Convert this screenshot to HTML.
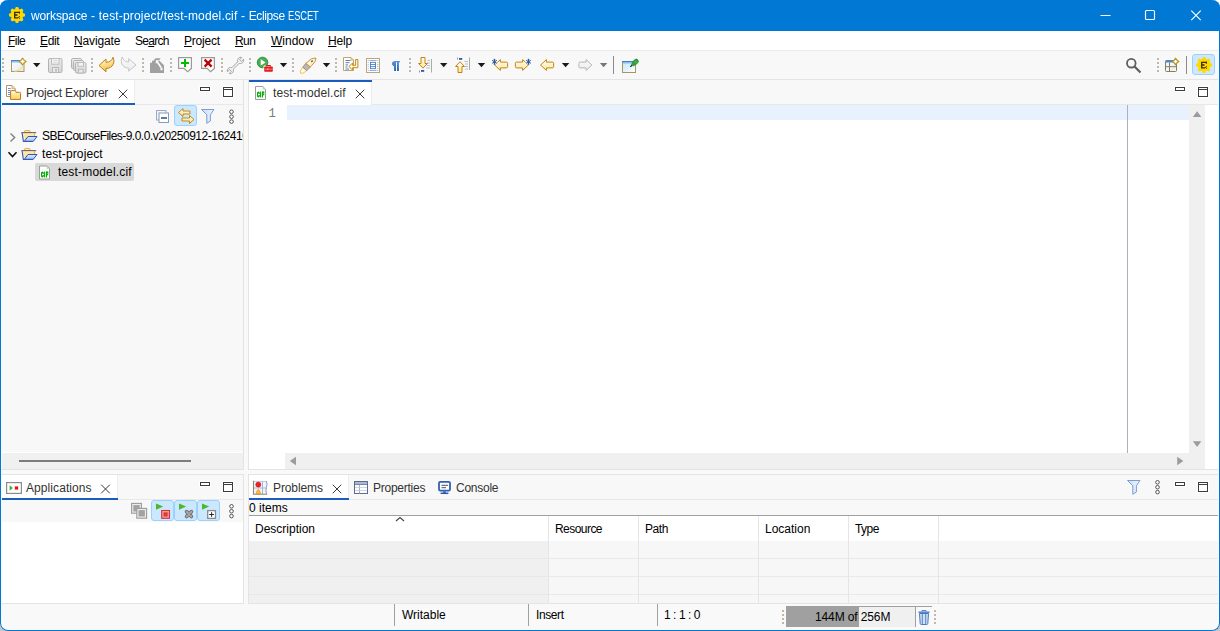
<!DOCTYPE html>
<html lang="en">
<head>
<meta charset="utf-8">
<title>workspace - test-project/test-model.cif - Eclipse ESCET</title>
<style>
*{box-sizing:border-box;margin:0;padding:0}
html,body{width:1220px;height:631px;overflow:hidden;background:#fff}
body{font-family:"Liberation Sans",sans-serif;font-size:12px;color:#000;position:relative}
.a{position:absolute}
.t{position:absolute;white-space:nowrap;line-height:16px;height:16px}
#win{left:0;top:0;width:1220px;height:631px;background:#f9f9f9;border-radius:8px;overflow:hidden}
#frame{left:0;top:0;width:1220px;height:631px;border:1px solid #0078d4;border-top:none;border-radius:8px;z-index:50;pointer-events:none}
#title{left:0;top:0;width:1220px;height:31px;background:#0078d4;color:#fff}
#menu{left:1px;top:31px;width:1218px;height:19px;background:#fff}
#menu .t{top:2px}
#tb{left:1px;top:49px;width:1218px;height:31px;background:#f8f8f8;border-top:1px solid #fff;border-bottom:1px solid #e6e6e6;box-shadow:inset 0 1px 0 #ececec}
.panel{position:absolute;background:#f8f8f8;border:1px solid #e4e4e4;overflow:hidden}
.tab{position:absolute;background:#fff;height:24px;top:0;border-right:1px solid #ededed}
.tabline{position:absolute;left:0;top:24px;height:1px;background:#e8e8e8}
.ul{position:absolute;height:2px;background:#1b5cbe}
.tt{color:#333}
svg{position:absolute;overflow:visible}
u{text-decoration:underline;text-underline-offset:1px}
.sep{position:absolute;width:2px;height:14px;background-image:repeating-linear-gradient(#c0b8a8 0 2px,transparent 2px 4px)}
.vsep{position:absolute;width:1px;height:18px;background:#8a8a8a}
.hl{position:absolute;background:#cce8ff;border:1px solid #99d1ff;border-radius:3px}
.dd{position:absolute;width:0;height:0;border-left:4px solid transparent;border-right:4px solid transparent;border-top:4px solid #1a1a1a}
.mn{position:absolute;width:10px;height:4px;border:1px solid #3c3c3c;background:#fff;box-shadow:0 0 0 1px #fff}
.mx{position:absolute;width:10px;height:10px;border:1px solid #3c3c3c;border-top-width:1px;background:#fff;box-shadow:0 0 0 1px #fff}
.mx:after{content:"";position:absolute;left:0;top:1px;width:8px;height:1px;background:#3c3c3c}
.x{position:absolute;width:10px;height:10px}
.dots{position:absolute;width:5px;height:15px}
.cs{top:41px;width:1px;height:87px;background:#e5e5e5}
</style>
</head>
<body>
<div class="a" style="left:0;top:621px;width:10px;height:10px;background:#c6c6c6"></div>
<div class="a" style="left:1210px;top:621px;width:10px;height:10px;background:#c6c6c6"></div>
<div id="win" class="a">
<!-- title bar -->
<div id="title" class="a">
  <svg style="left:9px;top:7px" width="16" height="16" viewBox="0 0 16 16">
    <g fill="#ffd800">
      <circle cx="8" cy="8" r="6.350"/>
      <rect x="6.300" y="0" width="3.400" height="16" rx="1.300"/>
      <rect x="6.300" y="0" width="3.400" height="16" rx="1.300" transform="rotate(45 8 8)"/>
      <rect x="6.300" y="0" width="3.400" height="16" rx="1.300" transform="rotate(90 8 8)"/>
      <rect x="6.300" y="0" width="3.400" height="16" rx="1.300" transform="rotate(135 8 8)"/>
    </g>
    <path d="M10.300 5.300H5.700V10.900H9M5.700 8H8.500" fill="none" stroke="#3a2c00" stroke-width="1.300"/>
    <path d="M10.400 4.500V6.800" stroke="#3a2c00" stroke-width="1"/>
    <path d="M11 9.300L9.300 10.400L11 11.600" fill="none" stroke="#3a2c00" stroke-width=".9"/>
  </svg>
  <div class="t" style="left:31px;top:8px;letter-spacing:-0.11px;will-change:transform">workspace<span style="letter-spacing:0.25px"> - </span><span style="letter-spacing:0.17px">test-project/test-model.cif</span><span style="letter-spacing:0.2px"> - </span><span style="letter-spacing:-0.37px">Eclipse</span> <span style="display:inline-block;transform:scaleX(.775);transform-origin:0 50%;letter-spacing:-0.1px">ESCET</span></div>
  <svg style="left:1100px;top:10px" width="110" height="12" viewBox="0 0 110 12" fill="none" stroke="#fff" stroke-width="1.150">
    <path d="M0.5 5.5H10.5"/>
    <rect x="45.5" y="0.5" width="9" height="9" rx="1"/>
    <path d="M91.300 0.700L100.700 10.100M100.700 0.700L91.300 10.100"/>
  </svg>
</div>
<!-- menu bar -->
<div id="menu" class="a">
  <div class="t" style="left:7px;letter-spacing:-0.55px"><u>F</u>ile</div>
  <div class="t" style="left:39px;letter-spacing:-0.35px"><u>E</u>dit</div>
  <div class="t" style="left:73px;letter-spacing:-0.13px"><u>N</u>avigate</div>
  <div class="t" style="left:134px;letter-spacing:-0.7px">Se<u>a</u>rch</div>
  <div class="t" style="left:183px;letter-spacing:-0.2px"><u>P</u>roject</div>
  <div class="t" style="left:234px;letter-spacing:-0.6px"><u>R</u>un</div>
  <div class="t" style="left:270px;letter-spacing:0px"><u>W</u>indow</div>
  <div class="t" style="left:327px;letter-spacing:-0.2px"><u>H</u>elp</div>
</div>
<!-- main toolbar -->
<div id="tb" class="a">
  <div class="sep" style="left:1px;top:8px"></div>
  <div class="sep" style="left:90px;top:8px"></div>
  <div class="sep" style="left:141px;top:8px"></div>
  <div class="sep" style="left:169px;top:8px"></div>
  <div class="sep" style="left:220px;top:8px"></div>
  <div class="sep" style="left:248px;top:8px"></div>
  <div class="sep" style="left:291px;top:8px"></div>
  <div class="sep" style="left:334px;top:8px"></div>
  <div class="sep" style="left:408px;top:8px"></div>
  <div class="sep" style="left:1156px;top:8px"></div>
  <div class="vsep" style="left:612px;top:6px"></div>
  <div class="vsep" style="left:1185px;top:6px"></div>
  <div class="hl" style="left:1191px;top:4px;width:23px;height:21px"></div>
</div>
<svg id="tbi" class="a" style="left:0;top:50px;z-index:5" width="1220" height="30" viewBox="0 50 1220 30">
<defs>
  <linearGradient id="gy" x1="0" y1="0" x2="0" y2="1"><stop offset="0" stop-color="#fffffa"/><stop offset="1" stop-color="#fee69c"/></linearGradient>
  <linearGradient id="gg" x1="0" y1="0" x2="0" y2="1"><stop offset="0" stop-color="#fbfbfb"/><stop offset="1" stop-color="#ebebeb"/></linearGradient>
  <linearGradient id="gb" x1="0" y1="0" x2="1" y2="1"><stop offset="0" stop-color="#ffffff"/><stop offset="1" stop-color="#dbe9f8"/></linearGradient>
  <linearGradient id="gp" x1="0" y1="0" x2="0" y2="1"><stop offset="0" stop-color="#5f95d6"/><stop offset="1" stop-color="#1d63b4"/></linearGradient>
  <linearGradient id="gs" x1="0" y1="0" x2="0" y2="1"><stop offset="0" stop-color="#ededed"/><stop offset="1" stop-color="#d6d6d6"/></linearGradient>
  <linearGradient id="gu" x1="0" y1="0" x2="0.300" y2="1"><stop offset="0" stop-color="#fffef8"/><stop offset=".5" stop-color="#fde596"/><stop offset="1" stop-color="#f6bb4a"/></linearGradient>
  <linearGradient id="gc" x1="0" y1="0" x2="1" y2="1"><stop offset="0" stop-color="#c4e6fa"/><stop offset="1" stop-color="#ffffff"/></linearGradient>
  <path id="arL" d="M0.6 6L6.4 0.6V3.1H12.4Q13.6 3.1 13.6 4.300V7.700Q13.6 8.900 12.4 8.900H6.4V11.4Z"/>
  <path id="ddn" d="M0 0h7.4L3.7 4.2z"/>
</defs>
<!-- new -->
<g>
  <rect x="11.500" y="60.500" width="12.500" height="11" fill="url(#gb)" stroke="#b09a56"/>
  <rect x="11" y="60" width="13.500" height="1.600" fill="#3f86d4"/>
  <rect x="12" y="61.600" width="11.500" height="1" fill="#9cc6ee"/>
  <path d="M14.500 71Q21.500 70.500 22.800 65.500" fill="none" stroke="#f3e2a6" stroke-width="1.300"/>
  <path d="M22.600 58.300Q23.700 60.400 25.800 61.500Q23.700 62.600 22.600 64.700Q21.500 62.600 19.400 61.500Q21.500 60.400 22.600 58.300Z" fill="#fff" stroke="#b99422" stroke-width="1.500" stroke-linejoin="round"/>
  <path d="M22.600 59.500V63.500M20.600 61.500H24.600" stroke="#fff" stroke-width="1.300"/>
</g>
<use href="#ddn" x="33" y="63" fill="#1a1a1a"/>
<!-- save (disabled) -->
<g fill="url(#gs)" stroke="#b2b2b2">
  <rect x="48.500" y="58.500" width="13.500" height="14" rx="1.300"/>
  <rect x="51.500" y="58.500" width="7.500" height="5.700" fill="#f4f4f4" stroke="#bcbcbc"/>
  <path d="M53 60.500H57.500M53 62.300H57.500" stroke="#d6d6d6" stroke-width=".8"/>
  <rect x="52.500" y="67.500" width="6" height="5" fill="#e9e9e9" stroke="#b8b8b8"/>
  <rect x="55.300" y="68.700" width="1.400" height="3" fill="#b0b0b0" stroke="none"/>
</g>
<!-- save all (disabled) -->
<g fill="url(#gs)" stroke="#b2b2b2">
  <rect x="71.500" y="58.500" width="10" height="10" rx="1.300"/>
  <rect x="73.500" y="60.500" width="10" height="10" rx="1.300"/>
  <rect x="75.500" y="62.500" width="10.500" height="10.500" rx="1.300"/>
  <rect x="78" y="62.500" width="5.500" height="3.800" fill="#f4f4f4" stroke="#bcbcbc"/>
  <rect x="78.500" y="69.200" width="4.600" height="3.800" fill="#e9e9e9" stroke="#b8b8b8"/>
</g>
<!-- undo -->
<path d="M99 65.500L106 59V62.300C109.500 62.300 112 60.500 113 57.300C115.200 61.500 113.500 68.300 106 68.500V71.800Z" fill="url(#gu)" stroke="#bd7f18" stroke-linejoin="round"/>
<!-- redo (disabled) -->
<path d="M136 65L128.700 58.600V62C125.500 62 123 60 122.200 57C120 61 121.500 68 128.700 68.200V71.200Z" fill="url(#gg)" stroke="#c6c6c6" stroke-linejoin="round"/>
<!-- build-like gray -->
<path d="M150 73V62.800H152V60.800H153.500L155.500 58.200H160.800L159 60.300L164 65.300V73Z" fill="#a0a0a0"/>
<path d="M155.800 60.200H159.300L158.100 61.500L161.900 67.300L160.500 68.200L156.900 62.700L155.800 63.900Z" fill="#fbfbfb"/>
<path d="M160.500 68.300L162.500 67.500V70.300H160.500Z" fill="#fbfbfb"/>
<!-- add -->
<g>
  <path d="M178.600 57.600H191.400V68.400L187.600 71.800L184 68.400H178.600Z" fill="#fff" stroke="#9a9a9a" stroke-width="1.200"/>
  <path d="M185 59V67M181 63H189" stroke="#00bf00" stroke-width="2"/>
</g>
<!-- remove -->
<g>
  <path d="M201.600 57.600H214.400V68.400L210.600 71.800L207 68.400H201.600Z" fill="#fff" stroke="#9a9a9a" stroke-width="1.200"/>
  <path d="M204.600 59.600L211.600 66.600M211.600 59.600L204.600 66.600" stroke="#c00000" stroke-width="2.300"/>
</g>
<!-- wrench (disabled) -->
<path d="M243.600 59.200L241.300 61.400L239.600 59.700L241.800 57.400C239.400 56.700 236.800 58.800 237.700 61.800L231.800 67.700C228.800 66.800 226.700 69.400 227.400 71.800L229.700 69.600L231.400 71.300L229.200 73.600C231.600 74.300 234.200 72.200 233.300 69.200L239.200 63.300C242.200 64.200 244.300 61.600 243.600 59.200Z" fill="#f4f4f4" stroke="#a4a4a4" stroke-width="1" stroke-linejoin="round"/>
<!-- run external tools -->
<g>
  <circle cx="262.550" cy="62.450" r="5.300" fill="#46ad4c" stroke="#2b8a3a" stroke-width=".9"/>
  <path d="M260.700 59.300L265.700 62.450L260.700 65.600Z" fill="#fff"/>
  <rect x="263.500" y="65.600" width="10" height="6.900" rx="1" fill="#fbfbfb"/>
  <path d="M266.700 66.600V65.500H270.300V66.600" fill="none" stroke="#df1616" stroke-width="1.100"/>
  <rect x="264.200" y="66.500" width="8.600" height="5.300" rx=".8" fill="#e31a1a"/>
  <path d="M264.500 69.200H272.600" stroke="#f59a9a" stroke-width=".8"/>
  <path d="M267.700 68.400V70" stroke="#f59a9a" stroke-width="1.600"/>
</g>
<use href="#ddn" x="279.800" y="63" fill="#1a1a1a"/>
<!-- pen -->
<g stroke-linejoin="round">
  <path d="M300.200 71.200L302.800 67.200L306.800 70.700L303 73.200L300.600 73.200Z" fill="#fffdf0" stroke="#f2c24e" stroke-width="1"/>
  <path d="M302.800 67.200L305.800 63.300L310.300 67L306.800 70.700Z" fill="#b9b7c2" stroke="#9a8452" stroke-width=".8"/>
  <path d="M305.800 63.300L311.800 58.600L316 58L315 61.800L310.300 67Z" fill="#fdf1c4" stroke="#c48d28" stroke-width=".9"/>
  <path d="M309 63.500L313.500 59.800" stroke="#fffdf4" stroke-width="1.300"/>
  <path d="M311.300 62L312.700 60.500" stroke="#2f5aa6" stroke-width="1.200"/>
</g>
<use href="#ddn" x="322.800" y="63" fill="#1a1a1a"/>
<!-- word wrap -->
<g>
  <path d="M343.500 57.500H351L353.500 60V70.500H343.500Z" fill="#fffef8" stroke="#b9a56e"/>
  <path d="M351 57.500V60H353.500" fill="none" stroke="#b9a56e" stroke-width=".8"/>
  <path d="M345.500 60.500H350.500M345.500 62.700H349.500M345.500 64.900H348M345.500 67H347.500M345.500 69H349" stroke="#4870b4" stroke-width=".9"/>
  <path d="M355.600 59.500H357.900V67.700H352.600V70L348.800 66.500L352.600 63V65.300H355.600Z" fill="#fff6d2" stroke="#c0820f" stroke-width=".9" stroke-linejoin="round"/>
</g>
<!-- block selection -->
<g>
  <rect x="366.500" y="58.500" width="13" height="14" fill="#fff" stroke="#b9a978"/>
  <path d="M369.500 60.500H376.500M369.500 70.500H376.500" stroke="#86a6dc" stroke-width=".9"/>
  <rect x="370.500" y="62.300" width="5" height="6.400" fill="#fff" stroke="#3a6ebc" stroke-width=".8"/>
  <path d="M370.500 64.500H375.500M370.500 66.600H375.500" stroke="#3a6ebc" stroke-width=".8"/>
  <path d="M368.200 60V72M377.800 60V72" stroke="#86a6dc" stroke-width=".9" stroke-dasharray="1 1"/>
</g>
<!-- pilcrow -->
<g fill="url(#gp)">
  <path d="M395 61H400V62.300H398.900V71H397V62.300H396V71H394.100V66.200C392.800 66.200 392 65 392 63.600C392 62.100 393 61 395 61Z" stroke="#fdfdfd" stroke-width="1.400" paint-order="stroke"/>
</g>
<!-- next annotation -->
<g>
  <path d="M427.500 60.500H430M427 63H430M427 65.500H430M426 68H430" stroke="#a3b6de" stroke-width=".9"/>
  <path d="M431.500 59V72.500" stroke="#9aa890" stroke-width=".9"/>
  <path d="M419.500 70.500V72.500" stroke="#6f8fc4" stroke-width=".9"/>
  <rect x="421" y="70" width="3.200" height="1.800" fill="#2f5aa6"/>
  <path d="M421 57.500H425V63.500H427.500L423 68.200L418.500 63.500H421Z" fill="url(#gy)" stroke="#c2840f" stroke-linejoin="round"/>
</g>
<use href="#ddn" x="440" y="63" fill="#1a1a1a"/>
<!-- prev annotation -->
<g>
  <path d="M464.500 61.500H468M465 64H468M465 66.500H468M465 69H468" stroke="#a3b6de" stroke-width=".9"/>
  <path d="M469.500 57.500V70" stroke="#9aa890" stroke-width=".9"/>
  <path d="M457.500 57.500V59.500" stroke="#6f8fc4" stroke-width=".9"/>
  <rect x="459" y="58" width="3.200" height="1.800" fill="#2f5aa6"/>
  <path d="M458 72.500H462V66.500H464.500L460 61.800L455.500 66.500H458Z" fill="url(#gy)" stroke="#c2840f" stroke-linejoin="round"/>
</g>
<use href="#ddn" x="477.800" y="63" fill="#1a1a1a"/>
<!-- last edit location -->
<g>
  <use href="#arL" x="494" y="59" fill="url(#gy)" stroke="#c2840f" stroke-linejoin="round"/>
  <path d="M494.5 58.800V64.800M492.1 60.300L496.9 63.300M496.9 60.300L492.1 63.300" stroke="#fbfbfb" stroke-width="2.200"/><path d="M494.5 58.800V64.800" stroke="#2f5a96" stroke-width="1.500"/><path d="M492.1 60.300L496.9 63.300M496.9 60.300L492.1 63.300" stroke="#2f5a96" stroke-width="1"/>
</g>
<!-- next edit location -->
<g>
  <use href="#arL" transform="translate(529 59) scale(-1 1)" fill="url(#gy)" stroke="#c2840f" stroke-linejoin="round"/>
  <path d="M528.5 58.800V64.800M526.1 60.300L530.9 63.300M530.9 60.300L526.1 63.300" stroke="#fbfbfb" stroke-width="2.200"/><path d="M528.5 58.800V64.800" stroke="#2f5a96" stroke-width="1.500"/><path d="M526.1 60.300L530.9 63.300M530.9 60.300L526.1 63.300" stroke="#2f5a96" stroke-width="1"/>
</g>
<!-- back -->
<use href="#arL" x="540" y="59" fill="url(#gy)" stroke="#c2840f" stroke-linejoin="round"/>
<use href="#ddn" x="561.900" y="63" fill="#1a1a1a"/>
<!-- forward (disabled) -->
<use href="#arL" transform="translate(592.500 59) scale(-1 1)" fill="url(#gg)" stroke="#b6b6b6" stroke-linejoin="round"/>
<use href="#ddn" x="599.900" y="63" fill="#777"/>
<!-- pin editor -->
<g>
  <rect x="622.500" y="61.500" width="13" height="11" fill="url(#gc)" stroke="#a8965e"/>
  <rect x="622" y="61" width="14" height="1.500" fill="#3b80d0"/>
  <rect x="622.500" y="62.500" width="13" height="1.100" fill="#9cc4ec"/>
  <path d="M630.300 66.800L632.300 64.800" stroke="#222" stroke-width="1.200"/>
  <path d="M631.500 64.300L634.300 60Q636.300 58.200 637.800 59.800Q639.300 61.800 637.200 63.500L633.200 66Z" fill="#2fa43a" stroke="#1f8c2c" stroke-width=".8" stroke-linejoin="round"/>
  <path d="M634.500 61.200L636.700 62.800" stroke="#6cc46c" stroke-width=".9"/>
</g>
<!-- search -->
<g fill="none" stroke="#5e5e5e">
  <circle cx="1131.300" cy="63.200" r="4.300" stroke-width="1.800"/>
  <path d="M1134.500 66.500L1140.500 72.500" stroke-width="2.200"/>
</g>
<!-- open perspective -->
<g>
  <rect x="1165.500" y="60.500" width="11" height="11" rx="1" fill="#eef6ff" stroke="#8c7c52"/>
  <path d="M1165.600 62.500V61.500Q1165.600 60.300 1166.800 60.300H1175.200Q1176.400 60.300 1176.400 61.500V62.500Z" fill="#4a8ad2"/>
  <path d="M1169.500 62.500V71.500M1165.500 66.700H1176.500" stroke="#8c7c52" stroke-width="1"/>
  <path d="M1171.500 70L1175 67.800" stroke="#ecd9a0" stroke-width=".8" stroke-dasharray="1 .7"/>
  <path d="M1175.600 58.300Q1176.700 60.400 1178.800 61.500Q1176.700 62.600 1175.600 64.700Q1174.500 62.600 1172.400 61.500Q1174.500 60.400 1175.600 58.300Z" fill="#fff" stroke="#b99422" stroke-width="1.400" stroke-linejoin="round"/>
</g>
<!-- perspective gear -->
<g transform="translate(1196 57)">
  <g fill="#ffd800">
    <circle cx="8" cy="8" r="6.350"/>
    <rect x="6.300" y="0" width="3.400" height="16" rx="1.300"/>
    <rect x="6.300" y="0" width="3.400" height="16" rx="1.300" transform="rotate(45 8 8)"/>
    <rect x="6.300" y="0" width="3.400" height="16" rx="1.300" transform="rotate(90 8 8)"/>
    <rect x="6.300" y="0" width="3.400" height="16" rx="1.300" transform="rotate(135 8 8)"/>
  </g>
  <path d="M10.300 5.300H5.700V10.900H9M5.700 8H8.500" fill="none" stroke="#3a2c00" stroke-width="1.300"/>
  <path d="M10.400 4.500V6.800" stroke="#3a2c00" stroke-width="1"/>
  <path d="M11 9.300L9.300 10.400L11 11.600" fill="none" stroke="#3a2c00" stroke-width=".9"/>
</g>
</svg>
<!-- Project Explorer -->
<div class="panel" id="pe" style="left:1px;top:79px;width:243px;height:391px;border-left-color:#fbfbfb">
  <div class="tabline" style="width:241px"></div>
  <div class="tab" style="left:0;width:133px"></div>
  <div class="ul" style="left:0;top:23px;width:133px"></div>
  <div class="t tt" style="left:24px;top:5px;letter-spacing:-0.2px">Project Explorer</div>
  <div class="mn" style="left:198px;top:7px"></div>
  <div class="mx" style="left:221px;top:7px"></div>
  <div class="hl" style="left:172px;top:25px;width:23px;height:21px"></div>
  <div class="a" style="left:33px;top:83px;width:99px;height:18px;background:#d9d9d9;border-radius:2px"></div>
  <div class="t" style="left:40px;top:48px;letter-spacing:-0.56px">SBECourseFiles-<span style="letter-spacing:-0.49px">9.0.0.v20250912-162410</span></div>
  <div class="t" style="left:40px;top:66px;letter-spacing:0.12px">test-project</div>
  <div class="t" style="left:56px;top:84px;letter-spacing:0.18px">test-model.cif</div>
  <div class="a" style="left:0;top:372px;width:241px;height:1px;background:#fff"></div>
  <div class="a" style="left:0;top:373px;width:241px;height:16px;background:#f0f0f0"></div>
  <div class="a" style="left:17px;top:380px;width:172px;height:2px;background:#7c7c7c"></div>
</div>
<svg class="a" style="left:0;top:80px;z-index:5" width="245" height="120" viewBox="0 80 245 120">
<defs>
  <linearGradient id="fb" x1="0" y1="0" x2="0" y2="1"><stop offset="0" stop-color="#dcedff"/><stop offset="1" stop-color="#9cc6f2"/></linearGradient>
  <linearGradient id="fl" x1="0" y1="0" x2="0" y2="1"><stop offset="0" stop-color="#fffdf0"/><stop offset="1" stop-color="#fde08a"/></linearGradient>
  <linearGradient id="fy" x1="0" y1="0" x2="0" y2="1"><stop offset="0" stop-color="#fff8c4"/><stop offset="1" stop-color="#fcd55c"/></linearGradient>
  <filter id="nolcd"><feComponentTransfer><feFuncA type="linear" slope="1.150" intercept="0"/></feComponentTransfer></filter>
  <g id="prj">
    <rect x="2" y="3" width="11.500" height="6.500" fill="#fde7a2"/>
    <path d="M3.500 2.500V1.200Q3.500 0.500 4.200 0.500H8.300Q9 0.500 9 1.200V2.500Z" fill="#fdeab0" stroke="#cfae66" stroke-width=".9"/>
    <path d="M13.600 3V6.300" stroke="#cfae66" stroke-width=".9"/>
    <path d="M0.300 2.600H15.200" stroke="#6e5868" stroke-width="1"/>
    <path d="M1.100 3L2.400 11.500H12" fill="none" stroke="#3454b4" stroke-width="1.100"/>
    <path d="M3.300 11.300L7 6.500H16L12.300 11.300Z" fill="url(#fb)" stroke="#3454b4" stroke-width="1" stroke-linejoin="round"/>
  </g>
  <g id="cif">
    <path d="M0.500 0.500H7.800L10.500 3.200V13.500H0.500Z" fill="#fff" stroke="#9c9c9c"/>
    <path d="M7.600 0.800V3.400H10.200Z" fill="#cfcfcf"/>
    <text filter="url(#nolcd)" transform="translate(2.100 11) scale(.500 1)" font-family="Liberation Sans, sans-serif" font-weight="bold" font-size="7.200" fill="#00b000" stroke="#00b000" stroke-width=".800" letter-spacing="1.300">CIF</text>
  </g>
  <g id="x9" fill="none" stroke="#2e2e2e" stroke-width=".95"><path d="M0.700 0.700L9.300 9.300M9.300 0.700L0.700 9.300"/></g>
  <g id="d3" fill="#fff" stroke="#444" stroke-width=".9"><circle cx="2.500" cy="2.300" r="1.800"/><circle cx="2.500" cy="7.200" r="1.800"/><circle cx="2.500" cy="12.100" r="1.800"/></g>
  <linearGradient id="fg" x1="0" y1="0" x2="1" y2="0"><stop offset="0" stop-color="#c4def8"/><stop offset="1" stop-color="#eef6ff"/></linearGradient>
  <g id="fun"><path d="M0.500 0.500H12.900L9.400 5.800V12L5.800 14.300V5.800Z" fill="url(#fg)" stroke="#7d9ccc" stroke-linejoin="round"/></g>
</defs>
<!-- tab icon -->
<g>
  <path d="M6.500 85.500H12L15.200 88.700V96.500H6.500Z" fill="#fff" stroke="#a89a62"/>
  <path d="M12 85.500V88.700H15.200" fill="#e8dfc0" stroke="#b8a870" stroke-width=".8"/>
  <path d="M8 88.500H10.800M8 90.500H10.800M8 92.500H10.800M8 94.500H10.800" stroke="#5f86d0" stroke-width=".9"/>
  <path d="M10.600 99.400V91.500Q10.600 90.600 11.500 90.600H15Q15.800 90.600 15.800 91.500V92.300H19.600Q20.500 92.300 20.500 93.200V99.400Z" fill="url(#fy)" stroke="#c27524" stroke-linejoin="round"/>
  <path d="M11.700 92.300H15.500" stroke="#fffbe0" stroke-width=".8"/>
</g>
<use href="#x9" x="118" y="89"/>
<!-- collapse all -->
<g>
  <rect x="156.500" y="110.500" width="9.500" height="9.500" fill="#f2f6fc" stroke="#9aaac8"/>
  <rect x="159" y="113" width="9.500" height="9.500" fill="#fff" stroke="#8a9ab8"/>
  <path d="M161 118H167" stroke="#1f4f8f" stroke-width="1.300"/>
</g>
<!-- link with editor -->
<g fill="url(#fl)" stroke="#c08a1a" stroke-width="1" stroke-linejoin="round">
  <path d="M178.500 112.500L183 108.500V111H190V114H183V116.500Z"/>
  <path d="M194 119.500L189.500 115.500V118H182V121H189.500V123.500Z"/>
</g>
<use href="#fun" x="201" y="109"/>
<use href="#d3" x="229" y="109.500"/>
<!-- tree -->
<path d="M10.500 133.500L14.700 137.500L10.500 141.500" fill="none" stroke="#7c7c7c" stroke-width="1.300"/>
<path d="M8.500 152.300L12.500 156.500L16.500 152.300" fill="none" stroke="#111" stroke-width="1.600"/>
<use href="#prj" x="21" y="130"/>
<use href="#prj" x="21" y="148"/>
<use href="#cif" x="39" y="165.500"/>
</svg>
<!-- Editor -->
<div class="panel" id="ed" style="left:248px;top:79px;width:971px;height:391px;border-right-color:#fbfbfb">
  <div class="tabline" style="width:969px"></div>
  <div class="a" style="left:0;top:25px;width:969px;height:364px;background:#fff"></div>
  <div class="tab" style="left:0;width:123px;height:25px"></div>
  <div class="ul" style="left:0;top:0;width:123px"></div>
  <div class="t tt" style="left:24px;top:5px;letter-spacing:0.1px">test-model.cif</div>
  <div class="mn" style="left:926px;top:7px"></div>
  <div class="mx" style="left:949px;top:7px"></div>
  <div class="a" style="left:38px;top:25px;width:902px;height:15px;background:#e8f2fe"></div>
  <div class="t" style="left:19.5px;top:27px;font-family:'Liberation Mono',monospace;font-size:12px;line-height:15px;color:#787878">1</div>
  <div class="a" style="left:878px;top:25px;width:1px;height:348px;background:#adb1b9"></div>
  <div class="a" style="left:940px;top:25px;width:16px;height:364px;background:#f0f0f0"></div>
  <div class="a" style="left:36px;top:373px;width:920px;height:16px;background:#f0f0f0"></div>
</div>
<svg class="a" style="left:0;top:80px;z-index:5" width="1220" height="390" viewBox="0 80 1220 390">
  <use href="#cif" x="255" y="86"/>
  <use href="#x9" x="355" y="89"/>
  <g fill="#9c9c9c">
    <path d="M1192.800 116.900H1201.400L1197.100 111.300Z"/>
    <path d="M1192.800 441.200H1201.400L1197.100 446.900Z"/>
    <path d="M289.800 461L296 456.800V465.200Z"/>
    <path d="M1183.400 461L1177.200 456.800V465.200Z"/>
  </g>
</svg>
<!-- Applications -->
<div class="panel" id="ap" style="left:1px;top:474px;width:243px;height:130px;border-left-color:#fbfbfb">
  <div class="tabline" style="width:241px"></div>
  <div class="tab" style="left:0;width:116px"></div>
  <div class="ul" style="left:0;top:23px;width:116px"></div>
  <div class="t tt" style="left:24px;top:5px;letter-spacing:0.08px">Applications</div>
  <div class="mn" style="left:198px;top:7px"></div>
  <div class="mx" style="left:221px;top:7px"></div>
  <div class="hl" style="left:149px;top:25px;width:23px;height:21px"></div>
  <div class="hl" style="left:172px;top:25px;width:23px;height:21px"></div>
  <div class="hl" style="left:195px;top:25px;width:23px;height:21px"></div>
  <div class="a" style="left:0;top:47px;width:241px;height:81px;background:#fff"></div>
</div>
<svg class="a" style="left:0;top:475px;z-index:5" width="245" height="50" viewBox="0 475 245 50">
  <!-- tab icon -->
  <rect x="6.600" y="482.600" width="14.800" height="10.800" fill="#fff" stroke="#8c8c8c" stroke-width="1.200"/>
  <path d="M9.700 485.200L12.800 488L9.700 490.800Z" fill="#3cb028"/>
  <rect x="14.800" y="486.400" width="3.400" height="3.200" fill="#f01010"/>
  <use href="#x9" x="100.500" y="484"/>
  <!-- stacked squares -->
  <rect x="131.600" y="503.400" width="9.800" height="9.800" fill="#ececec" stroke="#9a9a9a" stroke-width="1.100"/>
  <rect x="133.300" y="505.100" width="6.400" height="6.400" fill="#a2a2a2"/>
  <rect x="136.800" y="508.400" width="9.800" height="9.800" fill="#ececec" stroke="#9a9a9a" stroke-width="1.100"/>
  <rect x="138.500" y="510.100" width="6.400" height="6.400" fill="#a2a2a2"/>
  <!-- terminate buttons -->
  <path d="M156 503.400L163.200 506.600L156 509.800Z" fill="#4cb82a"/>
  <rect x="161.700" y="510.500" width="7.800" height="7.800" fill="#f3a0a0" stroke="#d83232" stroke-width="1.100"/>
  <rect x="163.500" y="512.300" width="4.200" height="4.200" fill="#dc3a3a"/>
  <path d="M179 503.400L186.200 506.600L179 509.800Z" fill="#4cb82a"/>
  <path d="M186.600 511.700L191.400 516.500M191.400 511.700L186.600 516.500" stroke="#6e6e6e" stroke-width="3.800" stroke-linecap="round"/>
  <path d="M186.600 511.700L191.400 516.500M191.400 511.700L186.600 516.500" stroke="#a4a4a4" stroke-width="2.200" stroke-linecap="round"/>
  <path d="M202 503.400L209.200 506.600L202 509.800Z" fill="#4cb82a"/>
  <rect x="207.700" y="510.600" width="7.800" height="7.800" fill="#fff" stroke="#8a8a8a" stroke-width="1.300"/>
  <path d="M211.600 512.200V516.800M209.300 514.500H213.900" stroke="#222" stroke-width="1"/>
  <use href="#d3" x="229" y="504"/>
</svg>
<!-- Problems -->
<div class="panel" id="pr" style="left:248px;top:474px;width:971px;height:130px;border-right-color:#fbfbfb">
  <div class="tabline" style="width:969px"></div>
  <div class="tab" style="left:0;width:100px"></div>
  <div class="ul" style="left:0;top:23px;width:100px"></div>
  <div class="t tt" style="left:24px;top:5px;letter-spacing:-0.1px">Problems</div>
  <div class="t tt" style="left:124px;top:5px;letter-spacing:-0.25px">Properties</div>
  <div class="t tt" style="left:207px;top:5px;letter-spacing:-0.25px">Console</div>
  <div class="mn" style="left:926px;top:7px"></div>
  <div class="mx" style="left:949px;top:7px"></div>
  <div class="t" style="left:0;top:25px">0 items</div>
  <!-- table -->
  <div class="a" style="left:0;top:40px;width:969px;height:1px;background:#a0a0a0"></div>
  <div class="a" style="left:0;top:41px;width:969px;height:25px;background:#fff"></div>
  <div class="a" id="rows" style="left:0;top:66px;width:969px;height:62px;background:repeating-linear-gradient(#f7f7f7 0 17px,#e9e9e9 17px 18px)"></div>
  <div class="a" style="left:0;top:66px;width:299px;height:62px;background:repeating-linear-gradient(#f0f0f0 0 17px,#e8e8e8 17px 18px)"></div>
  <div class="a cs" style="left:299px"></div>
  <div class="a cs" style="left:389px"></div>
  <div class="a cs" style="left:509px"></div>
  <div class="a cs" style="left:599px"></div>
  <div class="a cs" style="left:689px"></div>
  <div class="t" style="left:6px;top:46px">Description</div>
  <div class="t" style="left:306px;top:46px;letter-spacing:-0.55px">Resource</div>
  <div class="t" style="left:396px;top:46px;letter-spacing:-0.45px">Path</div>
  <div class="t" style="left:516px;top:46px">Location</div>
  <div class="t" style="left:606px;top:46px;letter-spacing:-0.55px">Type</div>
</div>
<svg class="a" style="left:0;top:475px;z-index:5" width="1220" height="50" viewBox="0 475 1220 50">
  <!-- problems icon -->
  <g>
    <rect x="254" y="481" width="12.500" height="13" fill="#f1f5fb"/>
    <path d="M254 481.400H266.500" stroke="#b4c0d6" stroke-width=".8"/>
    <path d="M262.500 481.500V494M254 488H266.500" stroke="#a3b1cc" stroke-width=".9"/>
    <path d="M266.300 481Q267.800 484 266.400 487.500Q265.200 491 266.800 494.300" fill="none" stroke="#8d9cbc" stroke-width="1"/>
    <path d="M253.500 480.800V494.300H267" fill="none" stroke="#8c876c" stroke-width="1.100"/>
    <circle cx="258.300" cy="484.600" r="2.600" fill="#e8222c" stroke="#c8161e" stroke-width=".5"/>
    <path d="M256 493.700L257 490.800L258.300 489.200L259.600 490.800L260.600 493.700Z" fill="#fbbd3a" stroke="#e8901a" stroke-width=".7" stroke-linejoin="round"/>
  </g>
  <use href="#x9" x="332" y="484"/>
  <!-- properties icon -->
  <g>
    <rect x="354.500" y="481.500" width="13" height="12" fill="#fdfdff" stroke="#5d6c8c"/>
    <rect x="355" y="482" width="12" height="2.300" fill="#a9b7d3"/>
    <path d="M355 484.500H367" stroke="#5d6c8c" stroke-width=".8"/>
    <path d="M359.500 484.500V493.500" stroke="#8f9cb8" stroke-width=".8"/>
    <path d="M355 487.500H367M355 490.500H367" stroke="#c3cbdc" stroke-width=".8"/>
  </g>
  <!-- console icon -->
  <g>
    <rect x="439" y="481.800" width="11" height="8.800" rx="1.300" fill="#fff" stroke="#3160ae" stroke-width="1.800"/>
    <path d="M441.500 485.300H448M441.500 487.700H446" stroke="#3a3a4a" stroke-width=".9"/>
    <path d="M444.500 491.300V493" stroke="#3160ae" stroke-width="2.400"/>
    <path d="M440.600 493.300H448.400" stroke="#2a57a4" stroke-width="1.500"/>
  </g>
  <use href="#fun" x="1127" y="480"/>
  <use href="#d3" x="1155" y="480"/>
  <path d="M396 521L400 517.500L404 521" fill="none" stroke="#444" stroke-width="1.100"/>
</svg>
<!-- status bar -->
<div class="a" style="left:394px;top:604px;width:1px;height:22px;background:#a0a0a0"></div>
<div class="a" style="left:528px;top:604px;width:1px;height:22px;background:#a0a0a0"></div>
<div class="a" style="left:657px;top:604px;width:1px;height:22px;background:#a0a0a0"></div>
<div class="t" style="left:402px;top:607px">Writable</div>
<div class="t" style="left:536px;top:607px;letter-spacing:-0.4px">Insert</div>
<div class="t" style="left:664px;top:607px;letter-spacing:-0.45px">1 : 1 : 0</div>
<div class="sep" style="left:782px;top:610px"></div>
<div class="sep" style="left:934px;top:610px"></div>
<div class="a" style="left:786px;top:606px;width:130px;height:21px;background:#f0f0f0;border-top:1px solid #a0a0a0;border-right:1px solid #a0a0a0"></div>
<div class="a" style="left:916px;top:606px;width:16px;height:1px;background:#a0a0a0"></div>
<div class="a" style="left:786px;top:606px;width:73px;height:21px;background:#a0a0a0"></div>
<div class="t" style="left:815px;top:609px;z-index:3;letter-spacing:-0.12px">144M of 256M</div>
<svg class="a" style="left:917px;top:609px;z-index:5" width="14" height="17" viewBox="0 0 14 17">
  <path d="M2.500 4.500H11.500L10.800 14.500Q10.700 15.500 9.700 15.500H4.300Q3.300 15.500 3.200 14.500Z" fill="#d2e1f6" stroke="#4a79c0"/>
  <path d="M5.300 5V15M8.700 5V15" stroke="#4a79c0" stroke-width=".9"/>
  <path d="M1.500 3.200H12.500" stroke="#4a79c0" stroke-width="1.400"/>
  <path d="M5 2.500V1.500H9V2.500" fill="none" stroke="#4a79c0" stroke-width=".9"/>
</svg>

</div>
<div id="frame" class="a"></div>
</body>
</html>
